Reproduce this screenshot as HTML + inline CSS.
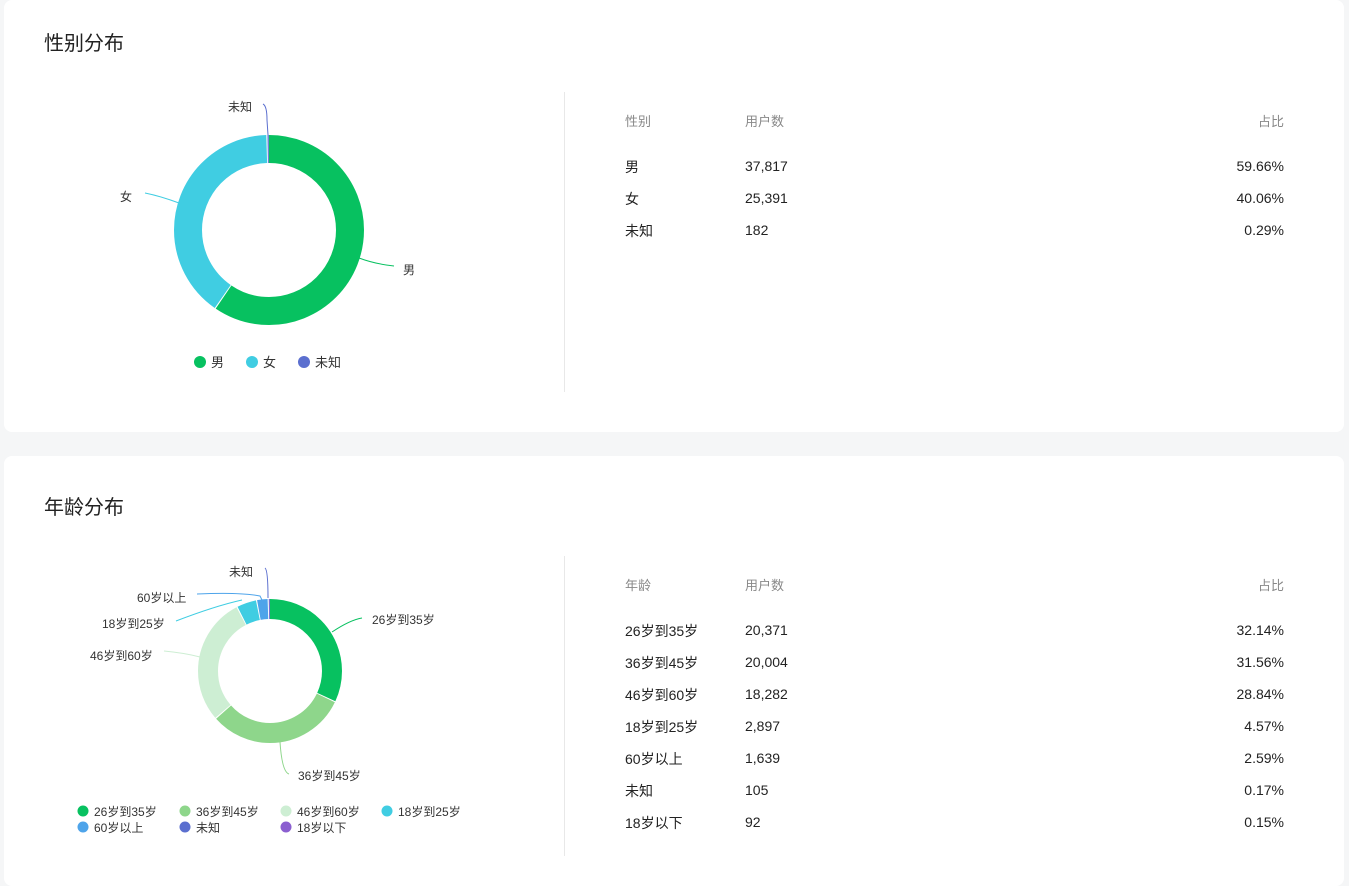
<!DOCTYPE html>
<html><head><meta charset="utf-8"><style>
*{margin:0;padding:0;box-sizing:border-box}
body{width:1349px;height:875px;background:#f5f6f7;font-family:"Liberation Sans","Noto Sans CJK SC",sans-serif;color:#222;position:relative;overflow:hidden}
.card{position:absolute;left:4px;width:1340px;background:#fff;border-radius:8px}
.t{position:absolute;font-size:14px;white-space:nowrap;line-height:18px}
.h{color:#888;font-size:13px}
.r{text-align:right}
.ttl{position:absolute;left:40px;font-size:20px;color:#222;line-height:26px}
.div{position:absolute;left:560px;width:1px;background:#e8e8e8}
svg{position:absolute;left:0;top:0}
</style></head><body>
<div class="card" style="top:0;height:432px">
<div class="ttl" style="top:31px">性别分布</div>
<div class="div" style="top:92px;height:300px"></div>
</div>
<div class="card" style="top:456px;height:430px">
<div class="ttl" style="top:39px">年龄分布</div>
<div class="div" style="top:100px;height:300px"></div>
</div>

<svg width="1349" height="875" font-family="Liberation Sans, Noto Sans CJK SC, sans-serif" font-size="12" fill="#333">
<g transform="translate(269,230) rotate(-90)" fill="none" stroke-width="28">
<circle r="81" stroke="#07c160" stroke-dasharray="302.6 1000" stroke-dashoffset="0"/>
<circle r="81" stroke="#40cde2" stroke-dasharray="202.8 1000" stroke-dashoffset="-303.6"/>
<circle r="81" stroke="#5b6fcf" stroke-dasharray="1.2 1000" stroke-dashoffset="-507.4"/>
</g>
<g fill="none" stroke-width="1">
<path d="M359 258 Q375 264 394 266" stroke="#07c160"/>
<path d="M145 193 Q160 196 179 203" stroke="#40cde2"/>
<path d="M263 104 Q267 106 267 120 L268 135" stroke="#5b6fcf"/>
</g>
<text x="403" y="274">男</text>
<text x="120" y="201">女</text>
<text x="228" y="111">未知</text>
<circle cx="200" cy="362" r="6" fill="#07c160"/><text x="211" y="367" font-size="13">男</text>
<circle cx="252" cy="362" r="6" fill="#40cde2"/><text x="263" y="367" font-size="13">女</text>
<circle cx="304" cy="362" r="6" fill="#5b6fcf"/><text x="315" y="367" font-size="13">未知</text>

<g transform="translate(270,671) rotate(-90)" fill="none" stroke-width="20">
<circle r="62" stroke="#07c160" stroke-dasharray="124.2 1000" stroke-dashoffset="0"/>
<circle r="62" stroke="#8ed68b" stroke-dasharray="121.9 1000" stroke-dashoffset="-125.2"/>
<circle r="62" stroke="#cdeed3" stroke-dasharray="111.3 1000" stroke-dashoffset="-248.1"/>
<circle r="62" stroke="#40cde2" stroke-dasharray="16.8 1000" stroke-dashoffset="-360.4"/>
<circle r="62" stroke="#4ea4ea" stroke-dasharray="9.1 1000" stroke-dashoffset="-378.2"/>
<circle r="62" stroke="#5b6fcf" stroke-dasharray="0.8 1000" stroke-dashoffset="-388.3"/>
<circle r="62" stroke="#8b5fd0" stroke-dasharray="0.6 1000" stroke-dashoffset="-389.0"/>
</g>
<g fill="none" stroke-width="1">
<path d="M332 632 Q350 620 362 618" stroke="#07c160"/>
<path d="M280 742 Q282 772 289 774" stroke="#8ed68b"/>
<path d="M164 651 Q185 653 200 657" stroke="#cdeed3"/>
<path d="M176 621 Q215 606 242 600" stroke="#40cde2"/>
<path d="M197 594 Q240 592 260 596 L262 600" stroke="#4ea4ea"/>
<path d="M265 568 Q268 570 268 598" stroke="#5b6fcf"/>
</g>
<text x="372" y="624">26岁到35岁</text>
<text x="298" y="780">36岁到45岁</text>
<text x="90" y="660">46岁到60岁</text>
<text x="102" y="628">18岁到25岁</text>
<text x="137" y="602">60岁以上</text>
<text x="229" y="576">未知</text>
<circle cx="83" cy="811" r="5.5" fill="#07c160"/><text x="94" y="816">26岁到35岁</text>
<circle cx="185" cy="811" r="5.5" fill="#8ed68b"/><text x="196" y="816">36岁到45岁</text>
<circle cx="286" cy="811" r="5.5" fill="#cdeed3"/><text x="297" y="816">46岁到60岁</text>
<circle cx="387" cy="811" r="5.5" fill="#40cde2"/><text x="398" y="816">18岁到25岁</text>
<circle cx="83" cy="827" r="5.5" fill="#4ea4ea"/><text x="94" y="832">60岁以上</text>
<circle cx="185" cy="827" r="5.5" fill="#5b6fcf"/><text x="196" y="832">未知</text>
<circle cx="286" cy="827" r="5.5" fill="#8b5fd0"/><text x="297" y="832">18岁以下</text>
</svg>

<div class="t h" style="left:625px;top:113px">性别</div>
<div class="t h" style="left:745px;top:113px">用户数</div>
<div class="t h r" style="right:65px;top:113px">占比</div>
<div class="t" style="left:625px;top:158px">男</div><div class="t" style="left:745px;top:157px">37,817</div><div class="t r" style="right:65px;top:157px">59.66%</div>
<div class="t" style="left:625px;top:190px">女</div><div class="t" style="left:745px;top:189px">25,391</div><div class="t r" style="right:65px;top:189px">40.06%</div>
<div class="t" style="left:625px;top:222px">未知</div><div class="t" style="left:745px;top:221px">182</div><div class="t r" style="right:65px;top:221px">0.29%</div>

<div class="t h" style="left:625px;top:577px">年龄</div>
<div class="t h" style="left:745px;top:577px">用户数</div>
<div class="t h r" style="right:65px;top:577px">占比</div>
<div class="t" style="left:625px;top:622px">26岁到35岁</div><div class="t" style="left:745px;top:621px">20,371</div><div class="t r" style="right:65px;top:621px">32.14%</div>
<div class="t" style="left:625px;top:654px">36岁到45岁</div><div class="t" style="left:745px;top:653px">20,004</div><div class="t r" style="right:65px;top:653px">31.56%</div>
<div class="t" style="left:625px;top:686px">46岁到60岁</div><div class="t" style="left:745px;top:685px">18,282</div><div class="t r" style="right:65px;top:685px">28.84%</div>
<div class="t" style="left:625px;top:718px">18岁到25岁</div><div class="t" style="left:745px;top:717px">2,897</div><div class="t r" style="right:65px;top:717px">4.57%</div>
<div class="t" style="left:625px;top:750px">60岁以上</div><div class="t" style="left:745px;top:749px">1,639</div><div class="t r" style="right:65px;top:749px">2.59%</div>
<div class="t" style="left:625px;top:782px">未知</div><div class="t" style="left:745px;top:781px">105</div><div class="t r" style="right:65px;top:781px">0.17%</div>
<div class="t" style="left:625px;top:814px">18岁以下</div><div class="t" style="left:745px;top:813px">92</div><div class="t r" style="right:65px;top:813px">0.15%</div>
</body></html>
